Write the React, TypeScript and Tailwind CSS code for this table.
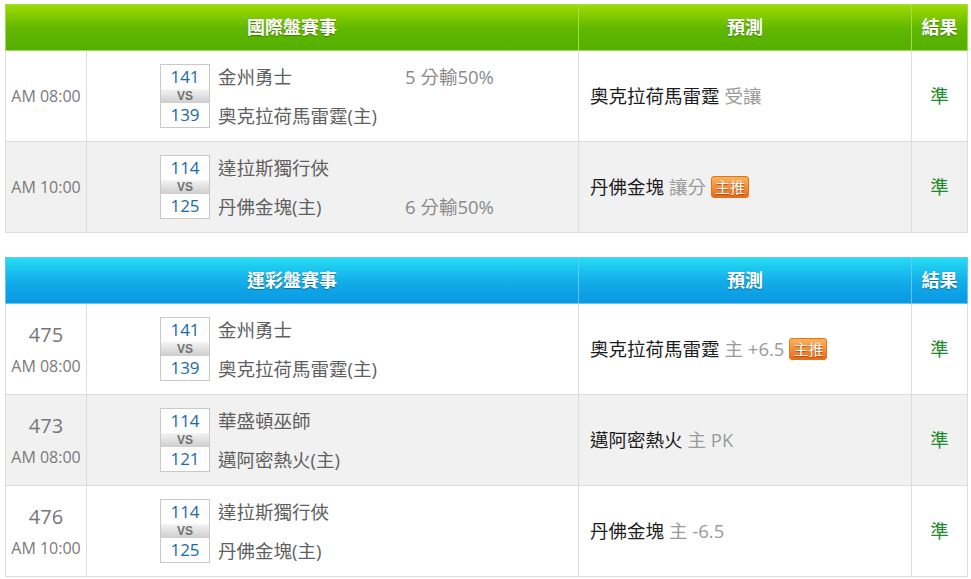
import React from "react"

type Match = {
  no?: string
  time: string
  home: [string, string]
  away: [string, string]
  line?: { text: string; at: 0 | 1 }
  pick: string
  note: string
  hot?: boolean
  result: string
}

const intl: Match[] = [
  {
    time: "AM 08:00",
    home: ["141", "金州勇士"],
    away: ["139", "奧克拉荷馬雷霆(主)"],
    line: { text: "5 分輸50%", at: 0 },
    pick: "奧克拉荷馬雷霆",
    note: "受讓",
    result: "準",
  },
  {
    time: "AM 10:00",
    home: ["114", "達拉斯獨行俠"],
    away: ["125", "丹佛金塊(主)"],
    line: { text: "6 分輸50%", at: 1 },
    pick: "丹佛金塊",
    note: "讓分",
    hot: true,
    result: "準",
  },
]

const sport: Match[] = [
  {
    no: "475",
    time: "AM 08:00",
    home: ["141", "金州勇士"],
    away: ["139", "奧克拉荷馬雷霆(主)"],
    pick: "奧克拉荷馬雷霆",
    note: "主 +6.5",
    hot: true,
    result: "準",
  },
  {
    no: "473",
    time: "AM 08:00",
    home: ["114", "華盛頓巫師"],
    away: ["121", "邁阿密熱火(主)"],
    pick: "邁阿密熱火",
    note: "主 PK",
    result: "準",
  },
  {
    no: "476",
    time: "AM 10:00",
    home: ["114", "達拉斯獨行俠"],
    away: ["125", "丹佛金塊(主)"],
    pick: "丹佛金塊",
    note: "主 -6.5",
    result: "準",
  },
]

function HotBadge() {
  return (
    <span className="ml-[5px] inline-flex h-[22px] items-center rounded-[3px] border border-[#e2741c] bg-gradient-to-b from-[#fbb45a] to-[#ec6810] px-[3px] text-[15px] leading-none text-white [text-shadow:0_1px_1px_rgba(120,40,0,0.6)]">
      主推
    </span>
  )
}

function TeamBox({ a, b }: { a: string; b: string }) {
  return (
    <div className="flex w-[50px] flex-col border border-[#c9c9c9] bg-white">
      <div className="flex h-[24px] items-center justify-center text-[17px] text-[#1a6aa8]">{a}</div>
      <div className="flex h-[14px] items-center justify-center bg-gradient-to-b from-[#f4f4f4] to-[#cdcdcd] font-['Liberation_Sans',sans-serif] text-[12px] font-bold leading-none text-[#707070]">
        VS
      </div>
      <div className="flex h-[24px] items-center justify-center text-[17px] text-[#1a6aa8]">{b}</div>
    </div>
  )
}

function Row({ m, i }: { m: Match; i: number }) {
  const bg = i % 2 === 1 ? "bg-[#f1f1f1]" : "bg-white"
  return (
    <tr className={`h-[91px] ${bg}`}>
      <td className="border border-[#dcdcdc] text-center align-middle">
        {m.no && <div className="mb-[13px] text-[20px] leading-none text-[#777]">{m.no}</div>}
        <div className="text-[16px] leading-none text-[#7a7a7a]">{m.time}</div>
      </td>
      <td className="border border-[#dcdcdc] align-middle">
        <div className="flex items-center pl-[73px]">
          <TeamBox a={m.home[0]} b={m.away[0]} />
          <div className="ml-[8px] flex w-[187px] flex-col text-[18.5px] text-[#5f5f5f]">
            <div className="flex h-[25px] items-center">{m.home[1]}</div>
            <div className="h-[14px]" />
            <div className="flex h-[25px] items-center">{m.away[1]}</div>
          </div>
          <div className="flex flex-col text-[18.5px] text-[#8a8a8a]">
            <div className="flex h-[25px] items-center">{m.line && m.line.at === 0 ? m.line.text : ""}</div>
            <div className="h-[14px]" />
            <div className="flex h-[25px] items-center">{m.line && m.line.at === 1 ? m.line.text : ""}</div>
          </div>
        </div>
      </td>
      <td className="border border-[#dcdcdc] pl-[11px] align-middle">
        <div className="flex items-center text-[18.5px]">
          <span className="text-[#1c1c1c]">{m.pick}</span>
          <span className="ml-[5px] text-[#9a9a9a]">{m.note}</span>
          {m.hot && <HotBadge />}
        </div>
      </td>
      <td className="border border-[#dcdcdc] text-center align-middle text-[18.5px] text-[#1f8a2e]">{m.result}</td>
    </tr>
  )
}

function Board({ title, rows, tone }: { title: string; rows: Match[]; tone: "green" | "blue" }) {
  const head =
    tone === "green"
      ? "bg-gradient-to-b from-[#9ddb00] via-[#62b800] to-[#52ae00]"
      : "bg-gradient-to-b from-[#26dcf3] via-[#13aee9] to-[#0a96e4]"
  const line = tone === "green" ? "border-[#a6dc4c]" : "border-[#62c8f0]"
  const th = `border ${line} text-[18px] font-bold text-white [text-shadow:0_1px_1px_rgba(0,0,0,0.35)]`
  return (
    <table className="w-[962px] table-fixed border-collapse">
      <colgroup>
        <col className="w-[81px]" />
        <col className="w-[492px]" />
        <col className="w-[333px]" />
        <col className="w-[56px]" />
      </colgroup>
      <thead>
        <tr className={`h-[46px] ${head}`}>
          <th colSpan={2} className={th}>
            {title}
          </th>
          <th className={th}>預測</th>
          <th className={th}>結果</th>
        </tr>
      </thead>
      <tbody>
        {rows.map((m, i) => (
          <Row key={i} m={m} i={i} />
        ))}
      </tbody>
    </table>
  )
}

export default function App() {
  return (
    <div className="min-h-[579px] bg-white pl-[5px] pt-[4px] font-['Open_Sans','Noto_Sans_CJK_TC',sans-serif]">
      <Board title="國際盤賽事" rows={intl} tone="green" />
      <div className="h-[24px]" />
      <Board title="運彩盤賽事" rows={sport} tone="blue" />
    </div>
  )
}
